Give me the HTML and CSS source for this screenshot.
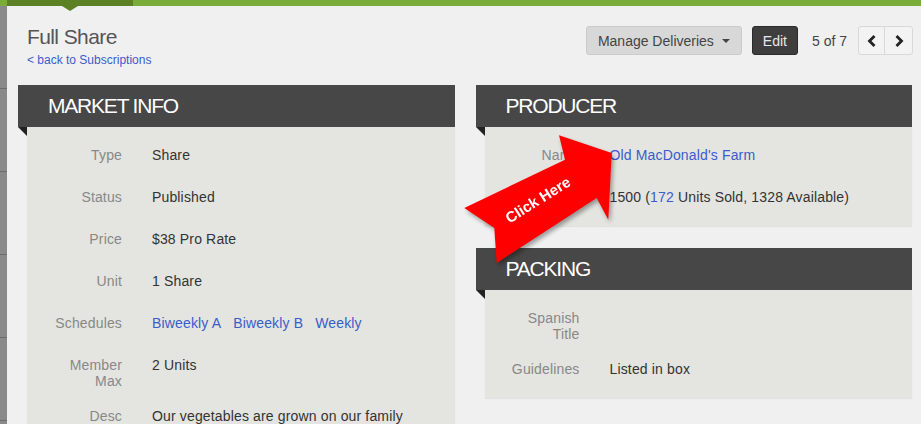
FILE: index.html
```html
<!DOCTYPE html>
<html>

<head>
    <meta charset="utf-8" />
    <title>Full Share</title>
    <meta name="viewport" content="width=device-width, initial-scale=1">
    <link rel="stylesheet" href="styles.css">
</head>

<body>
    <div class="app">

        <div class="topbar"><span class="topbar-active"></span></div>

        <div class="layout">
            <nav class="sidebar">
                <span></span><span></span><span></span><span></span><span></span>
            </nav>

            <main class="main">
                <header class="page-head">
                    <div class="page-title">
                        <h1>Full Share</h1>
                        <a href="#" class="back-link">&lt; back to Subscriptions</a>
                    </div>
                    <div class="actions">
                        <button class="btn btn-light">Manage Deliveries<span class="caret"></span></button>
                        <button class="btn btn-dark">Edit</button>
                        <span class="pager-count">5 of 7</span>
                        <div class="pager">
                            <button class="pager-btn pager-prev">
                                <svg width="10" height="12" viewBox="0 0 10 12"><polyline points="7.5,1 2.5,6 7.5,11" fill="none" stroke="#222" stroke-width="2.8"/></svg>
                            </button>
                            <button class="pager-btn pager-next">
                                <svg width="10" height="12" viewBox="0 0 10 12"><polyline points="2.5,1 7.5,6 2.5,11" fill="none" stroke="#222" stroke-width="2.8"/></svg>
                            </button>
                        </div>
                    </div>
                </header>

                <div class="columns">
                    <div class="col">
                        <section class="card">
                            <h2 class="card-head">Market Info</h2>
                            <div class="card-body">
                                <div class="row"><div class="label">Type</div><div class="value">Share</div></div>
                                <div class="row"><div class="label">Status</div><div class="value">Published</div></div>
                                <div class="row"><div class="label">Price</div><div class="value">$38 Pro Rate</div></div>
                                <div class="row"><div class="label">Unit</div><div class="value">1 Share</div></div>
                                <div class="row">
                                    <div class="label">Schedules</div>
                                    <div class="value links">
                                        <a href="#">Biweekly A</a>
                                        <a href="#">Biweekly B</a>
                                        <a href="#">Weekly</a>
                                    </div>
                                </div>
                                <div class="row"><div class="label">Member<br>Max</div><div class="value">2 Units</div></div>
                                <div class="row"><div class="label">Desc</div><div class="value">Our vegetables are grown on our family farm without synthetic pesticides or fertilizers.</div></div>
                            </div>
                        </section>
                    </div>

                    <div class="col">
                        <section class="card">
                            <h2 class="card-head">Producer</h2>
                            <div class="card-body">
                                <div class="row"><div class="label">Name</div><div class="value"><a href="#">Old MacDonald's Farm</a></div></div>
                                <div class="row"><div class="label">Quantity</div><div class="value">1500 (<a href="#">172</a> Units Sold, 1328 Available)</div></div>
                            </div>
                        </section>

                        <section class="card">
                            <h2 class="card-head">Packing</h2>
                            <div class="card-body">
                                <div class="row"><div class="label">Spanish<br>Title</div><div class="value"></div></div>
                                <div class="row"><div class="label">Guidelines</div><div class="value">Listed in box</div></div>
                            </div>
                        </section>
                    </div>
                </div>
            </main>
        </div>

        <!-- annotation arrow pasted over the screenshot -->
        <svg class="callout" width="170" height="145" viewBox="0 0 170 145">
            <polygon points="9.3,80 110,31.7 104,7.3 156.7,25 153.3,91.7 141.7,70 41.7,135 39.3,100" fill="#ff0000"/>
            <text x="83" y="77" transform="rotate(-32 83 72)" text-anchor="middle" class="callout-text">Click Here</text>
        </svg>

    </div>
</body>

</html>
```

FILE: styles.css
```css
body {
    margin: 0;
    background: #f0f0f0;
    font-family: "Liberation Sans", Arial, sans-serif;
    font-size: 14px;
    color: #333;
}

a {
    color: #3a5ccc;
    text-decoration: none;
}

.app {
    position: relative;
    min-height: 100vh;
}

.topbar {
    height: 6px;
    background: #7aac3a;
}

.topbar-active {
    display: block;
    position: relative;
    margin-left: 7px;
    width: 126px;
    height: 6px;
    background: #5b8124;
}

.topbar-active:after {
    content: "";
    position: absolute;
    left: 55px;
    top: 6px;
    border-top: 5px solid #5b8124;
    border-left: 8px solid transparent;
    border-right: 8px solid transparent;
}

.layout {
    display: flex;
    min-height: calc(100vh - 6px);
}

.sidebar {
    width: 7px;
    flex-shrink: 0;
    background: #8a8a8a;
}

.sidebar span {
    display: block;
    height: 82px;
    border-bottom: 1px solid #6c6c6c;
}

.main {
    flex: 1;
}

/* page header */

.page-head {
    display: flex;
    justify-content: space-between;
    align-items: flex-start;
    padding: 20px 8px 0 20px;
}

.page-title h1 {
    margin: 0;
    font-size: 21px;
    font-weight: normal;
    line-height: 22px;
    letter-spacing: -0.6px;
    color: #555;
}

.back-link {
    display: block;
    margin-top: 5px;
    font-size: 12px;
    line-height: 14px;
}

.actions {
    display: flex;
    align-items: center;
}

.btn {
    height: 29px;
    padding: 0 11px;
    border: 1px solid;
    border-radius: 3px;
    font-family: inherit;
    font-size: 14px;
    cursor: pointer;
}

.btn-light {
    background: #d8d8d8;
    border-color: #cbcbcb;
    color: #444;
}

.btn-dark {
    margin-left: 10px;
    padding: 0 10px;
    background: #3e3e3e;
    border-color: #2b2b2b;
    color: #e8e8e8;
}

.caret {
    display: inline-block;
    vertical-align: middle;
    margin-left: 8px;
    margin-top: -2px;
    border-top: 4px solid #444;
    border-left: 4px solid transparent;
    border-right: 4px solid transparent;
}

.pager-count {
    margin: 0 11px 0 14px;
    color: #444;
}

.pager {
    display: flex;
}

.pager-btn {
    display: flex;
    align-items: center;
    justify-content: center;
    width: 27px;
    height: 29px;
    padding: 0;
    background: #f3f3f3;
    border: 1px solid #d9d9d9;
    cursor: pointer;
}

.pager-prev {
    border-radius: 3px 0 0 3px;
}

.pager-next {
    width: 29px;
    margin-left: -1px;
    border-radius: 0 3px 3px 0;
}

/* cards */

.columns {
    display: grid;
    grid-template-columns: 1fr 1fr;
    gap: 21px;
    align-items: start;
    margin-top: 18px;
    padding: 0 9px 0 11px;
}

.card + .card {
    margin-top: 22px;
}

.card-head {
    position: relative;
    margin: 0;
    padding-left: 30px;
    background: #474747;
    color: #fff;
    font-size: 21px;
    font-weight: normal;
    line-height: 42px;
    letter-spacing: -1.2px;
    text-transform: uppercase;
}

.card-head:after {
    content: "";
    position: absolute;
    left: 0;
    top: 100%;
    border-top: 9px solid #222;
    border-left: 9px solid transparent;
}

.card-body {
    margin-left: 9px;
    padding: 11px 24px 4px 0;
    background: #e4e4e0;
    box-shadow: 0 1px 1px rgba(0, 0, 0, 0.06);
}

.row {
    display: grid;
    grid-template-columns: 95px 1fr;
    column-gap: 30px;
    box-sizing: border-box;
    min-height: 42px;
    padding: 9px 0 10px;
    line-height: 16px;
    letter-spacing: 0.15px;
}

.label {
    text-align: right;
    color: #888;
}

.value {
    color: #333;
}

.links {
    display: flex;
    gap: 12px;
}

/* arrow */

.callout {
    position: absolute;
    left: 455px;
    top: 128px;
    overflow: visible;
    filter: drop-shadow(2px 3px 2px rgba(0, 0, 0, 0.35));
}

.callout-text {
    fill: #fff;
    font-family: "Liberation Sans", Arial, sans-serif;
    font-size: 15px;
    font-weight: bold;
}
```
